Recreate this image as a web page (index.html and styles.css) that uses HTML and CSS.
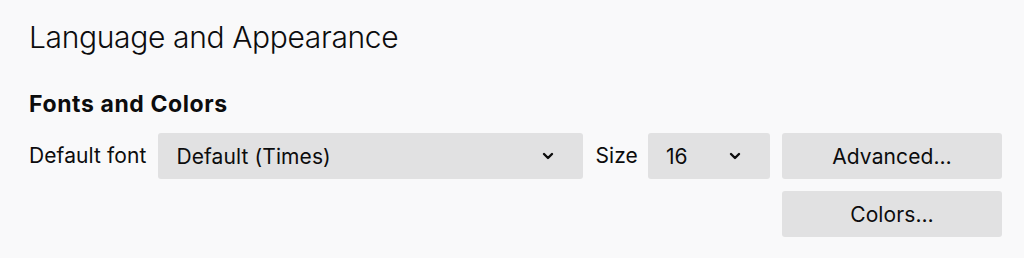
FILE: index.html
```html
<!DOCTYPE html>
<html>
<head>
<meta charset="utf-8">
<link rel="stylesheet" href="styles.css">
</head>
<body>
<div class="pane">
  <h1 class="title">Language and Appearance</h1>
  <h2 class="section">Fonts and Colors</h2>
  <div class="row">
    <span class="label">Default font</span>
    <div class="select font-select">
      <span>Default (Times)</span>
      <svg class="chev" width="12" height="8" viewBox="0 0 12 8"><path d="M2 2 L6 6 L10 2" fill="none" stroke="#0c0c0d" stroke-width="2.4" stroke-linecap="round" stroke-linejoin="round"/></svg>
    </div>
    <span class="label label-size">Size</span>
    <div class="select size-select">
      <span>16</span>
      <svg class="chev" width="12" height="8" viewBox="0 0 12 8"><path d="M2 2 L6 6 L10 2" fill="none" stroke="#0c0c0d" stroke-width="2.4" stroke-linecap="round" stroke-linejoin="round"/></svg>
    </div>
    <div class="buttons">
      <button class="btn">Advanced…</button>
      <button class="btn">Colors…</button>
    </div>
  </div>
</div>
</body>
</html>
```
FILE: styles.css
```css
html, body {
  margin: 0;
  padding: 0;
  background: #f9f9fa;
  color: #0c0c0d;
  font-family: Inter, "Noto Sans", sans-serif;
}
.pane {
  padding: 17px 0 0 29px;
}
.title {
  margin: 0;
  font-size: 30px;
  font-weight: 300;
  line-height: 40px;
  letter-spacing: -0.35px;
}
.section {
  margin: 33px 0 0 0;
  font-size: 23px;
  font-weight: 700;
  line-height: 28px;
  letter-spacing: 0.6px;
}
.row {
  display: flex;
  align-items: flex-start;
  gap: 12px;
  margin-top: 15px;
  font-size: 21px;
  letter-spacing: 0.1px;
}
.label {
  line-height: 46px;
}
.label-size {
  margin-right: -2px;
}
.select {
  height: 46px;
  box-sizing: border-box;
  background: #e1e1e2;
  border-radius: 3px;
  display: flex;
  align-items: center;
  justify-content: space-between;
  padding: 0 29px 0 18px;
}
.font-select { width: 425px; }
.size-select { width: 122px; }
.chev { display: block; }
.buttons {
  display: flex;
  flex-direction: column;
  gap: 12px;
}
.btn {
  width: 220px;
  height: 46px;
  border: none;
  border-radius: 3px;
  background: #e1e1e2;
  color: #0c0c0d;
  font-family: inherit;
  font-size: 21px;
  letter-spacing: 0.1px;
  padding: 0;
}
```
